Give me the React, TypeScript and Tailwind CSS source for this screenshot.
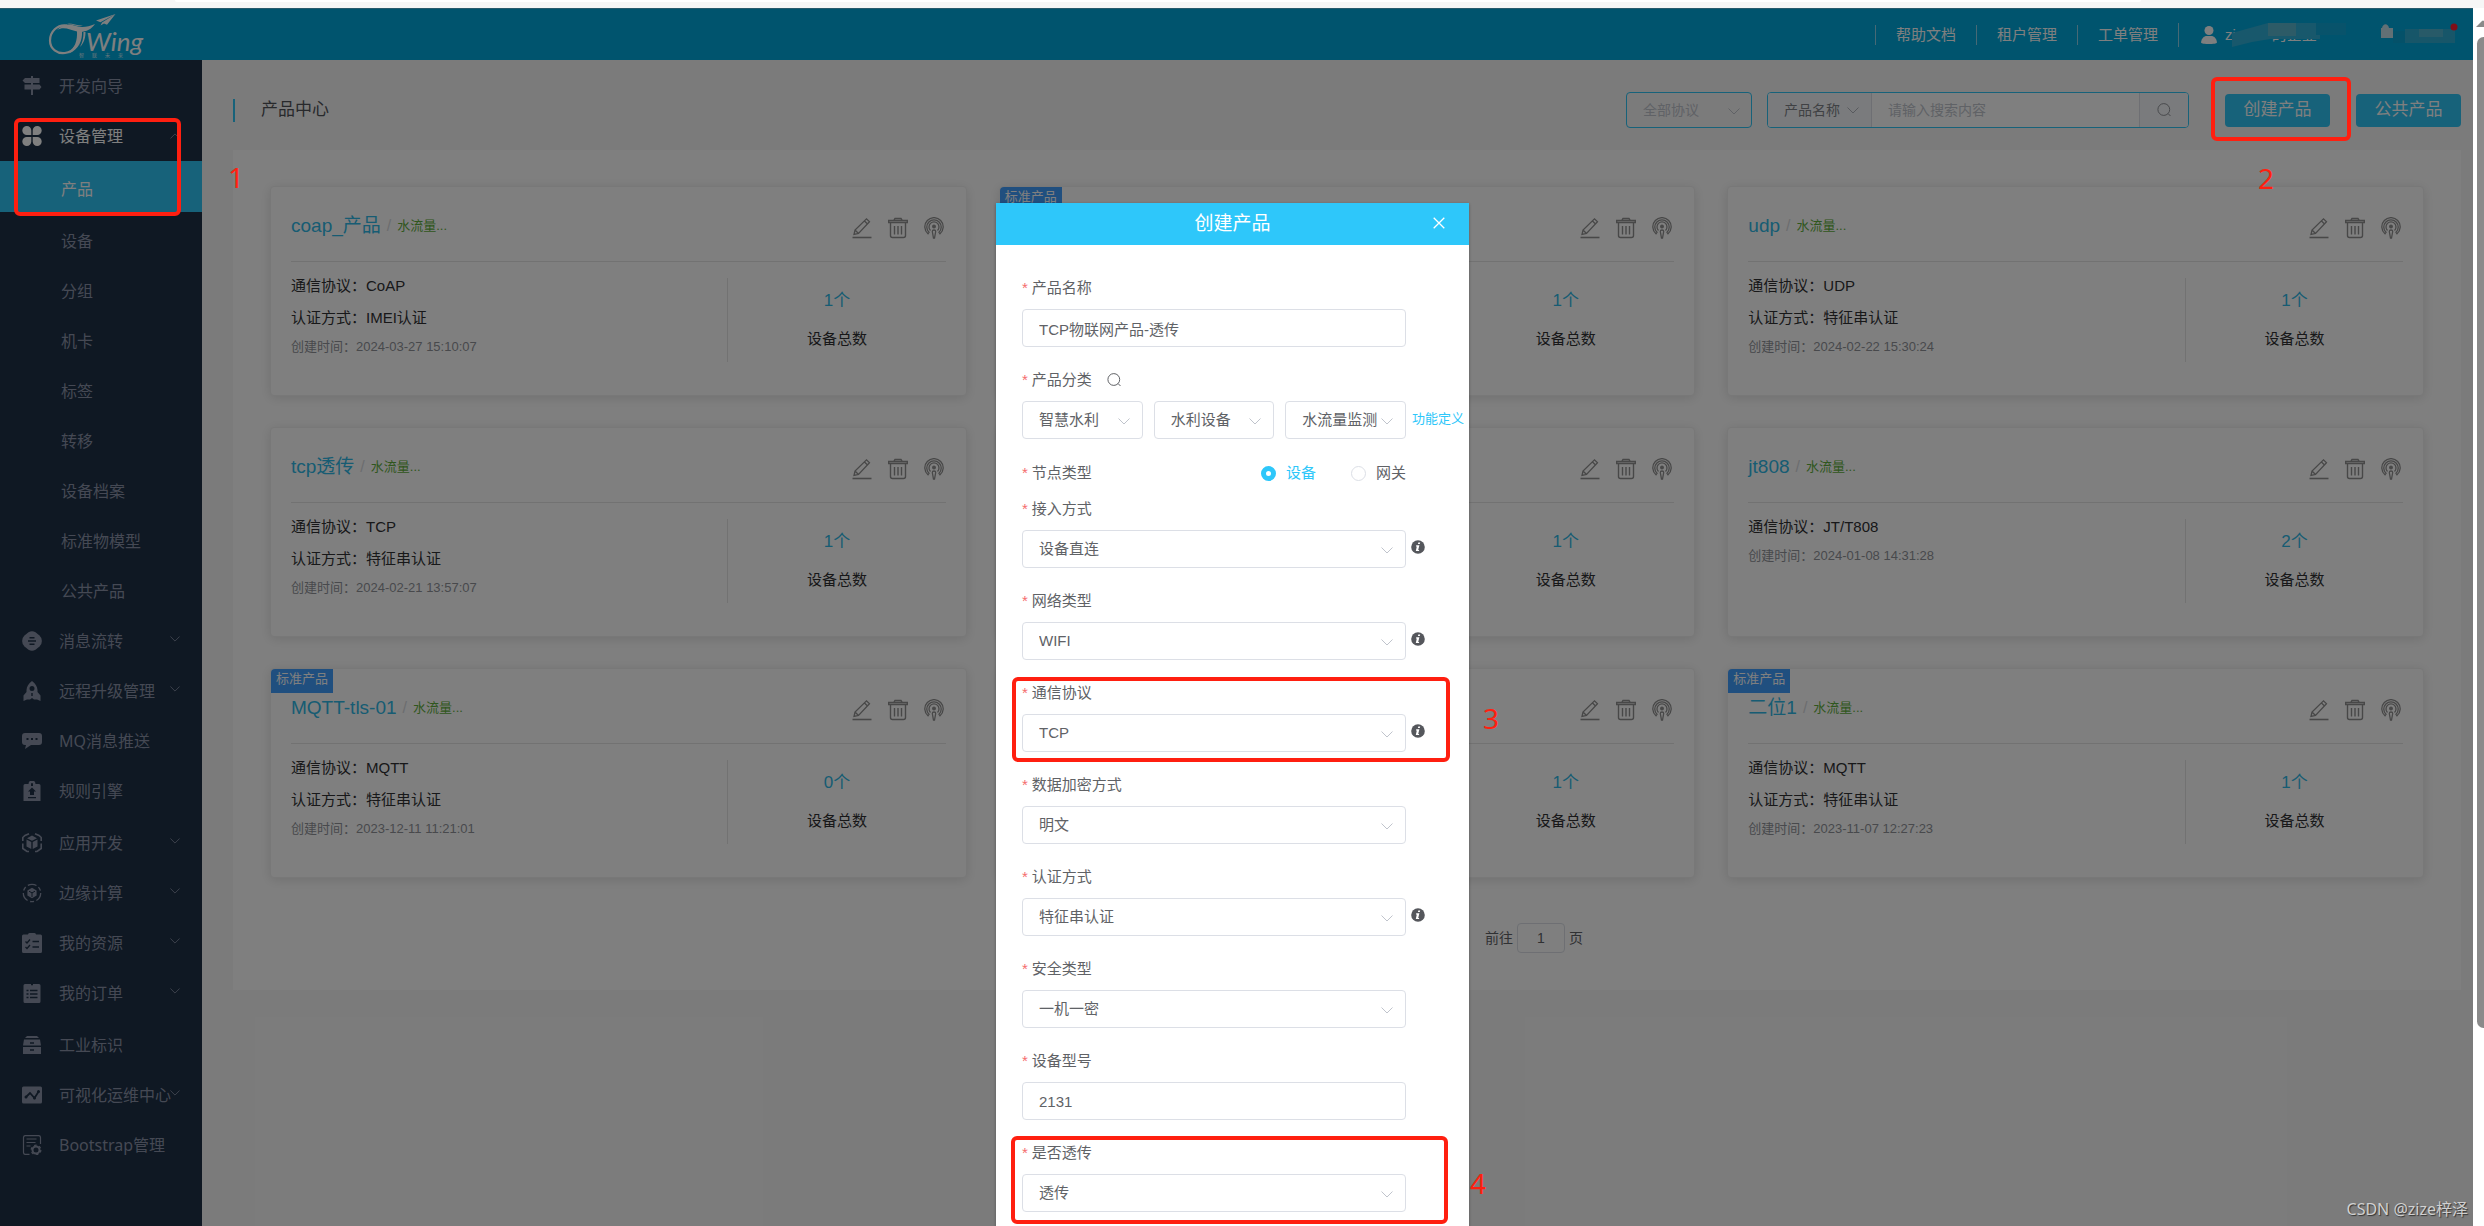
import type { ReactNode } from "react";

type MenuEntry = { label: string; icon: ReactNode; expandable?: boolean };

type Product = {
  name?: string;
  protocol?: string;
  auth?: string;
  createdAt?: string;
  count: number;
  standard?: boolean;
};

const PRODUCTS: Product[] = [
  { name: "coap_产品", protocol: "CoAP", auth: "IMEI认证", createdAt: "2024-03-27 15:10:07", count: 1 },
  { count: 1, standard: true },
  { name: "udp", protocol: "UDP", auth: "特征串认证", createdAt: "2024-02-22 15:30:24", count: 1 },
  { name: "tcp透传", protocol: "TCP", auth: "特征串认证", createdAt: "2024-02-21 13:57:07", count: 1 },
  { count: 1 },
  { name: "jt808", protocol: "JT/T808", createdAt: "2024-01-08 14:31:28", count: 2 },
  { name: "MQTT-tls-01", protocol: "MQTT", auth: "特征串认证", createdAt: "2023-12-11 11:21:01", count: 0, standard: true },
  { count: 1 },
  { name: "二位1", protocol: "MQTT", auth: "特征串认证", createdAt: "2023-11-07 12:27:23", count: 1, standard: true },
];

const DEVICE_PAGES = ["产品", "设备", "分组", "机卡", "标签", "转移", "设备档案", "标准物模型", "公共产品"];

function Glyph({ children }: { children: ReactNode }) {
  return (
    <svg viewBox="0 0 20 20" className="size-5 shrink-0" fill="currentColor" aria-hidden="true">
      {children}
    </svg>
  );
}

const signpostIcon = (
  <Glyph>
    <path d="M9 0h2v2h6.500v5H11v1.500h6.500L19.500 11l-2 2.500H11V19H9v-5.500H2.500v-5H9V7H3L.5 4.500 3 2h6z" />
  </Glyph>
);

const cloverIcon = (
  <Glyph>
    <path d="M4.800 0A4.500 4.500 0 0 1 9.300 4.500V9H4.800a4.500 4.500 0 0 1 0-9zM15.200 0a4.500 4.500 0 0 1 0 9h-4.500V4.500A4.500 4.500 0 0 1 15.200 0zM4.800 11h4.500v4.500A4.500 4.500 0 1 1 4.800 11zM10.700 11h4.500a4.500 4.500 0 1 1-4.500 4.500z" />
  </Glyph>
);

const flowIcon = (
  <Glyph>
    <path d="M6.500 1.200a7 7 0 0 1 7 0l4 3.300a7.500 7.500 0 0 1 0 11l-4 3.300a7 7 0 0 1-7 0l-4-3.300a7.500 7.500 0 0 1 0-11z" />
    <path d="M7.500 6.800h5M6 10h8M7.500 13.200h5" stroke="#1e3046" strokeWidth="1.500" />
  </Glyph>
);

const rocketIcon = (
  <Glyph>
    <path
      fillRule="evenodd"
      d="M10 0c3.500 2.500 5.300 5.500 5.500 9v2l3 3.500V20l-3.500-1.500H12L10 17l-2 1.500H5L1.500 20v-5.500l3-3.500V9C4.700 5.500 6.500 2.500 10 0zm0 5a2.500 2.500 0 1 0 0 5 2.500 2.500 0 0 0 0-5zM9.300 12v3h1.400v-3z"
    />
  </Glyph>
);

const chatIcon = (
  <Glyph>
    <path d="M3 2h14a3 3 0 0 1 3 3v6a3 3 0 0 1-3 3H9l-6 4 1-4H3a3 3 0 0 1-3-3V5a3 3 0 0 1 3-3z" />
    <path d="M4.500 7h2v2h-2zM9 7h2v2H9zM13.500 7h2v2h-2z" fill="#1e3046" />
  </Glyph>
);

const ruleIcon = (
  <Glyph>
    <path fillRule="evenodd" d="M3 3h3.500a3.500 3.500 0 0 1 7 0H17a1.500 1.500 0 0 1 1.500 1.500V20h-17V4.500A1.500 1.500 0 0 1 3 3zm7-1a1 1 0 0 0-1 1v2h2V3a1 1 0 0 0-1-1z" />
    <path d="M10 6.500l4 4h-2V14H8v-3.500H6zM6 16h8v1.300H6z" fill="#1e3046" />
  </Glyph>
);

const appIcon = (
  <Glyph>
    <path d="M10 2.500l5 2.700-5 2.600-5-2.600zM4.500 6.500l4.800 2.600v7L4.500 13.500zM15.500 6.500v7l-4.800 2.600v-7z" />
    <path
      d="M7 .8 3 2.500.8 4.500V8M13 .8l4 1.700 2.200 2V8M.8 10.500v5L5 18.500h2M19.200 10.500v5L15 18.500h-2"
      fill="none"
      stroke="currentColor"
      strokeWidth="1.600"
    />
  </Glyph>
);

const edgeIcon = (
  <Glyph>
    <path d="M10 4.800l4.600 2.600v5.200L10 15.200l-4.600-2.600V7.400z" />
    <path d="M7 8.200l3 1.700 3-1.700M10 9.900V14" fill="none" stroke="#1e3046" strokeWidth="1" />
    <circle cx="10" cy="10" r="8.700" fill="none" stroke="currentColor" strokeWidth="1.300" strokeDasharray="9 2.500 4 2.720" />
  </Glyph>
);

const resourceIcon = (
  <Glyph>
    <path d="M1.500 1.500H6A1.500 1.500 0 0 1 7.500 0h5A1.500 1.500 0 0 1 14 1.500h4.500A1.500 1.500 0 0 1 20 3v15.500a1.500 1.500 0 0 1-1.500 1.500h-17A1.500 1.500 0 0 1 0 18.500V3a1.500 1.500 0 0 1 1.500-1.500z" />
    <path d="M3.500 8.500 5 10l3-3.500M3.500 14 5 15.500 8 12M10.500 8.500H17M10.500 14H17" fill="none" stroke="#1e3046" strokeWidth="1.300" />
  </Glyph>
);

const orderIcon = (
  <Glyph>
    <path d="M3 1h14a1.500 1.500 0 0 1 1.500 1.500v16A1.500 1.500 0 0 1 17 20H3a1.500 1.500 0 0 1-1.500-1.500v-16A1.500 1.500 0 0 1 3 1z" />
    <path d="M4.500 7.500h2M8 7.500h7.500M4.500 11h2M8 11h7.500M4.500 14.500h2M8 14.500h7.500M9 1.500h2" stroke="#1e3046" strokeWidth="1.400" />
  </Glyph>
);

const drawerIcon = (
  <Glyph>
    <path d="M5 1h10l2 2H3zM2 4.500h16l1 6H1zM1 12h18v7H1z" />
    <path d="M8 8h4M8 15h4" stroke="#1e3046" strokeWidth="1.300" />
  </Glyph>
);

const chartIcon = (
  <Glyph>
    <rect x="0" y="1.500" width="20" height="17" rx="1.500" />
    <path d="M4 12l4-4 4.500 5L17 6" fill="none" stroke="#1e3046" strokeWidth="1.800" />
    <circle cx="4" cy="12" r="1.500" fill="#1e3046" />
    <circle cx="12.500" cy="13" r="1.500" fill="#1e3046" />
    <circle cx="16.500" cy="6.500" r="1.500" fill="#1e3046" />
  </Glyph>
);

const bootstrapIcon = (
  <Glyph>
    <path d="M7.500 19.300H3A1.800 1.800 0 0 1 1.500 17.500V2.500A1.800 1.800 0 0 1 3 .7h14a1.800 1.800 0 0 1 1.500 1.800V9M4.500 4h10M4.500 7.500h9M4.500 11h4" fill="none" stroke="currentColor" strokeWidth="1.200" />
    <circle cx="14" cy="15" r="3.500" fill="none" stroke="currentColor" strokeWidth="2" />
    <circle cx="14" cy="15" r="4.800" fill="none" stroke="currentColor" strokeWidth="1.300" strokeDasharray="2.500 2.530" />
  </Glyph>
);

// Lower menu entries, split where the console separates its sections
const MENU_SECTIONS: MenuEntry[][] = [
  [
    { label: "消息流转", icon: flowIcon, expandable: true },
    { label: "远程升级管理", icon: rocketIcon, expandable: true },
    { label: "MQ消息推送", icon: chatIcon },
    { label: "规则引擎", icon: ruleIcon },
  ],
  [
    { label: "应用开发", icon: appIcon, expandable: true },
    { label: "边缘计算", icon: edgeIcon, expandable: true },
    { label: "我的资源", icon: resourceIcon, expandable: true },
    { label: "我的订单", icon: orderIcon, expandable: true },
  ],
  [
    { label: "工业标识", icon: drawerIcon },
    { label: "可视化运维中心", icon: chartIcon, expandable: true },
    { label: "Bootstrap管理", icon: bootstrapIcon },
  ],
];

function Chevron({ className }: { className: string }) {
  return (
    <svg viewBox="0 0 12 7" className={className} fill="none" stroke="currentColor" aria-hidden="true">
      <path d="M.5.5 6 6 11.500.5" />
    </svg>
  );
}

function SearchIcon({ className }: { className: string }) {
  return (
    <svg viewBox="0 0 14 14" className={className} fill="none" stroke="currentColor" aria-hidden="true">
      <circle cx="6.800" cy="6.500" r="5.900" />
      <path d="M11 10.500l2.500 2.500" />
    </svg>
  );
}

function Callout({ className }: { className: string }) {
  return <span className={`pointer-events-none absolute z-50 rounded-md border-4 border-[#ff1f10] ${className}`} />;
}

function CalloutNumber({ value, className }: { value: number; className: string }) {
  return (
    <span className={`pointer-events-none absolute z-50 font-['Noto_Sans',sans-serif] text-[28px] leading-7 text-[#ff1f10] ${className}`}>
      {value}
    </span>
  );
}

function Logo() {
  return (
    <svg viewBox="0 0 100 46" className="ml-12 h-[46px] w-[100px]" fill="#fff" role="img" aria-label="CTWing">
      <path
        d="M19 13.500C9 12 2 20 2 28.500 2 37 9.500 42 17 41c5-.7 8.500-3.500 10.500-7"
        fill="none"
        stroke="#fff"
        strokeWidth="2.200"
      />
      <path d="M9 18c7-7 13-6 19-4s12 1 19-2c-4 6-11 9-18 7.500S16 14 9 18z" />
      <path d="M19 11.500c6-.5 10 2.500 16 2-5 2-10-1-16-2z" />
      <path d="M29 19h5c.5 10-3 18-13 22.500 6-6 8.500-13 8-22.500z" />
      <path d="M35.500 20h2c0 6-1.500 11-5.500 15 2.500-5 3.500-9 3.500-15z" />
      <path d="M67.500 2 48 8.500l4.500 1.800zM67.500 2 54 10.500l-1.500 3 3.500-2 3 1.200z" />
      <text x="38" y="39" fontFamily="Lato, sans-serif" fontSize="26" fontStyle="italic">
        Wing
      </text>
      <g fontFamily="'Noto Sans CJK SC', sans-serif" fontSize="5" opacity="0.8">
        <text x="31" y="45">智</text>
        <text x="44" y="45">联</text>
        <text x="57" y="45">未</text>
        <text x="70" y="45">来</text>
      </g>
    </svg>
  );
}

function TopBar() {
  return (
    <header className="flex h-[52px] shrink-0 items-center justify-between border-t border-[#50b4d8] bg-[#00a8dc] text-[15px] text-white">
      <Logo />
      <div className="flex items-center">
        <nav className="flex">
          {["帮助文档", "租户管理", "工单管理"].map((label) => (
            <a key={label} href="#" className="border-l border-[#8fd3ea] px-5 leading-5">
              {label}
            </a>
          ))}
        </nav>
        <div className="flex w-[295px] items-center border-l border-[#8fd3ea] pl-[22px] leading-5">
          <svg viewBox="0 0 16 18" className="h-[18px] w-4" fill="currentColor" aria-hidden="true">
            <circle cx="8" cy="4.500" r="4.500" />
            <path d="M0 16.500C.5 12 3.500 10 5.500 10h5c2 0 5 2 5.500 6.500-.5 2-15.500 2-16 0z" />
          </svg>
          <span className="ml-2">zi</span>
          {/* account name is masked */}
          <span className="relative ml-9">
            的企业
            <svg viewBox="0 0 120 26" className="absolute -left-10 -top-1 h-[26px] w-[120px]" aria-hidden="true">
              <path d="M0 12 36 2h52v16H38l-18 3-20 5z" fill="#30b0d8" />
              <path d="M36 2h28v13H36z" fill="#5ab6ce" />
              <path d="M84 2h30v12H84z" fill="#10a6d6" />
            </svg>
          </span>
          <svg viewBox="0 0 86 24" className="ml-16 h-6 w-[86px]" aria-hidden="true">
            <path d="M0 15V5h1c1-5 6-5 7 0h4v10z" fill="#c4e0ea" />
            <path d="M24 6h50v14H24z" fill="#2eacd2" />
            <path d="M38 6h24v8H38z" fill="#50b4d0" />
            <path d="M12 8h12v12H12z" fill="#08a2d2" />
            <circle cx="73" cy="4" r="3.500" fill="#ff1e30" />
          </svg>
        </div>
      </div>
    </header>
  );
}

function Sidebar() {
  return (
    <nav className="relative w-[202px] shrink-0 bg-[#1e3046] font-['Noto_Sans','Noto_Sans_CJK_SC',sans-serif] text-base text-[#8b93a8]">
      <a href="#" className="flex h-[51px] items-center gap-[17px] pl-[22px]">
        {signpostIcon}
        开发向导
      </a>
      <button type="button" className="flex h-[50px] w-full items-center gap-[17px] pl-[22px] text-white">
        {cloverIcon}
        设备管理
        <Chevron className="ml-auto mr-[22px] h-[6px] w-[10px] rotate-180 text-[#8b93a8]" />
      </button>
      <ul className="pb-1">
        {DEVICE_PAGES.map((label, index) => (
          <li key={label}>
            <a
              href="#"
              className={`flex items-center pl-[61px] ${index === 0 ? "h-[51px] bg-[#2ec4f4] pt-1 text-white" : "h-[50px] pt-2"}`}
            >
              {label}
            </a>
          </li>
        ))}
      </ul>
      <div className="flex flex-col gap-[2px]">
        {MENU_SECTIONS.map((section) => (
          <ul key={section[0].label}>
            {section.map((entry) => (
              <li key={entry.label}>
                <button type="button" className="relative flex h-[50px] w-full items-center gap-[17px] pl-[22px]">
                  {entry.icon}
                  {entry.label}
                  {entry.expandable && <Chevron className="absolute right-[22px] top-5 h-[6px] w-[10px]" />}
                </button>
              </li>
            ))}
          </ul>
        ))}
      </div>
      <Callout className="left-[14px] right-[21px] top-[58px] h-[98px]" />
      <CalloutNumber value={1} className="-right-[42px] top-[103px]" />
    </nav>
  );
}

function Toolbar() {
  return (
    <div className="flex items-center pb-[22px] pt-8">
      <h1 className="flex h-[23px] items-center border-l-2 border-[#2ec4f4] pl-[26px] text-[17px] text-[#505358]">产品中心</h1>
      <div className="relative ml-auto mr-[15px] w-[126px] text-[#c0c4cc]">
        <select aria-label="协议" className="h-9 w-full appearance-none rounded border border-[#2ec4f4] pl-4 text-sm">
          <option>全部协议</option>
        </select>
        <Chevron className="pointer-events-none absolute right-3 top-4 h-[7px] w-3" />
      </div>
      <div className="flex h-9 w-[422px] overflow-hidden rounded border border-[#2ec4f4] bg-white text-sm">
        <div className="relative w-[104px] border-r border-[#dcdfe6] bg-[#f5f7fa] text-[#808389]">
          <select aria-label="搜索字段" className="h-full w-full appearance-none pl-4">
            <option>产品名称</option>
          </select>
          <Chevron className="pointer-events-none absolute right-3 top-[14px] h-[7px] w-3 text-[#b0b4bc]" />
        </div>
        <input
          aria-label="搜索内容"
          placeholder="请输入搜索内容"
          className="min-w-0 flex-1 px-4 placeholder:text-[#c0c4cc]"
        />
        <button type="button" aria-label="搜索" className="flex w-[49px] items-center justify-center border-l border-[#dcdfe6] bg-[#f5f7fa] text-[#909399]">
          <SearchIcon className="size-[14px]" />
        </button>
      </div>
      <div className="relative ml-9 mr-[26px]">
        <button type="button" className="h-[33px] w-[105px] rounded bg-[#2ec4f4] text-[17px] text-white">
          创建产品
        </button>
        <Callout className="-bottom-[14px] -left-[14px] -right-[21px] -top-[17px]" />
        <CalloutNumber value={2} className="left-[33px] top-[70px]" />
      </div>
      <button type="button" className="h-[33px] w-[105px] rounded bg-[#2ec4f4] text-[17px] text-white">
        公共产品
      </button>
    </div>
  );
}

function CardActions() {
  return (
    <div className="ml-auto mr-[2px] flex gap-4 pt-1 text-[#909090]">
      <button type="button" aria-label="编辑">
        <svg viewBox="0 0 20 22" className="h-[22px] w-5" fill="none" stroke="currentColor" strokeWidth="1.300" aria-hidden="true">
          <path d="M2 17.500 3 13 14.500 1.800l3 3L6.500 16.500zM12.500 4l3 3M3 13l3.500 3.500" />
          <path d="M.5 20.500h19" strokeWidth="1.600" />
        </svg>
      </button>
      <button type="button" aria-label="删除">
        <svg viewBox="0 0 20 22" className="h-[22px] w-5" fill="none" stroke="currentColor" strokeWidth="1.400" aria-hidden="true">
          <path d="M.7 3.500h18.600v2H.7zM6 3.200 7 1.500h6l1 1.700M2.500 6v12.500c0 1.300.8 2 2 2h11c1.200 0 2-.7 2-2V6M6.500 9v8.500M10 9v8.500M13.500 9v8.500" />
        </svg>
      </button>
      <button type="button" aria-label="发布">
        <svg viewBox="0 0 20 22" className="h-[22px] w-5" fill="none" stroke="currentColor" strokeWidth="1.300" aria-hidden="true">
          <path d="M4 16.800a9.200 9.200 0 1 1 12 0l-1-1.500a7.200 7.200 0 1 0-10 0z" />
          <path d="M6.500 13.500a5 5 0 1 1 7 0" />
          <circle cx="10" cy="9.500" r="1.300" fill="currentColor" />
          <path d="M8.300 14.500c0-2 3.400-2 3.400 0L10.500 21h-1z" />
        </svg>
      </button>
    </div>
  );
}

function ProductCard({ product }: { product: Product }) {
  return (
    <article className="relative rounded border border-[#f0f0f0] bg-white px-5 pb-[33px] text-[15px] text-[#303133] shadow-[0_2px_12px_rgba(0,0,0,0.12)]">
      {product.standard && (
        <span className="absolute left-0 top-0 h-6 rounded-tl bg-[#409eff] px-[5px] text-[13px] leading-5 text-white">标准产品</span>
      )}
      <div className="flex h-[75px] items-center border-b border-[#e4e4e4] pt-1">
        {product.name && (
          <div className="flex items-center gap-[6px] text-[13px]">
            <a href="#" className="text-[19px] text-[#2eb8e6]">
              {product.name}
            </a>
            <span className="text-base text-[#d8dade]">/</span>
            <span className="text-[#5fae3c]">水流量...</span>
          </div>
        )}
        <CardActions />
      </div>
      <div className="flex pt-4">
        <dl className="-mt-2 h-[84px] flex-1">
          {product.protocol && (
            <div className="flex leading-8">
              <dt>通信协议：</dt>
              <dd>{product.protocol}</dd>
            </div>
          )}
          {product.auth && (
            <div className="flex leading-8">
              <dt>认证方式：</dt>
              <dd>{product.auth}</dd>
            </div>
          )}
          {product.createdAt && (
            <div className="flex text-[13px] leading-[26px] text-[#909399]">
              <dt>创建时间：</dt>
              <dd>{product.createdAt}</dd>
            </div>
          )}
        </dl>
        <div className="flex h-[84px] w-1/3 flex-col items-center justify-center gap-[14px] border-l border-[#e4e4e4]">
          <span className="text-[17px] leading-6 text-[#2eb8e6]">{product.count}个</span>
          <span className="leading-6">设备总数</span>
        </div>
      </div>
    </article>
  );
}

function Field({ id, label, extra, info, children }: { id: string; label: string; extra?: ReactNode; info?: boolean; children: ReactNode }) {
  return (
    <div className="relative mb-3 w-[384px]">
      <div className="flex h-[42px] items-center">
        <label htmlFor={id}>
          <span className="mr-1 text-[#f56c6c]">*</span>
          {label}
        </label>
        {extra}
      </div>
      {children}
      {info && (
        <svg viewBox="0 0 14 14" className="absolute -right-[19px] top-[52px] size-[14px]" aria-hidden="true">
          <circle cx="7" cy="7" r="6.800" fill="#55575c" />
          <path d="M7.300 2.500h1.900l-.4 1.600H6.900zM5.300 5.300h3.100l-1.200 4.600h1l-.2 1H4.800l1-4.500h-.9z" fill="#fff" />
        </svg>
      )}
    </div>
  );
}

function SelectBox({ id, value, label }: { id?: string; value: string; label?: string }) {
  return (
    <div className="relative flex-1">
      <select
        id={id}
        aria-label={label}
        className="h-[38px] w-full appearance-none rounded border border-[#dcdfe6] bg-white pl-4 pr-7"
      >
        <option>{value}</option>
      </select>
      <Chevron className="pointer-events-none absolute right-[13px] top-[17px] h-[7px] w-3 text-[#c0c4cc]" />
    </div>
  );
}

function CreateProductDialog() {
  const inputClass = "h-[38px] w-full rounded border border-[#dcdfe6] bg-white px-4";

  return (
    <div role="dialog" aria-label="创建产品" className="h-max w-[473px] bg-white text-[15px] text-[#606266] shadow-[0_1px_3px_rgba(0,0,0,0.3)]">
      <div className="relative flex h-[42px] items-center justify-center bg-[#2ec7fa] text-[19px] text-white">
        <h2>创建产品</h2>
        <button type="button" aria-label="关闭" className="absolute right-6 top-[14px]">
          <svg viewBox="0 0 12 12" className="size-3" stroke="currentColor" strokeWidth="1.300" aria-hidden="true">
            <path d="M.7.7l10.600 10.600M11.300.7.7 11.300" />
          </svg>
        </button>
      </div>
      <form className="px-[26px] pb-10 pt-[22px]">
        <Field id="name" label="产品名称">
          <input id="name" defaultValue="TCP物联网产品-透传" className={inputClass} />
        </Field>
        <Field id="category" label="产品分类" extra={<SearchIcon className="ml-[15px] size-[14px]" />}>
          <div className="flex gap-[11px]">
            <SelectBox id="category" value="智慧水利" />
            <SelectBox label="二级分类" value="水利设备" />
            <SelectBox label="三级分类" value="水流量监测" />
          </div>
          <a href="#" className="absolute left-[390px] top-[50px] whitespace-nowrap text-[13px] leading-5 text-[#2ec7fa]">
            功能定义
          </a>
        </Field>
        <fieldset className="flex h-[37px] w-[384px] items-center justify-between pt-2">
          <span>
            <span className="mr-1 text-[#f56c6c]">*</span>
            节点类型
          </span>
          <span className="flex gap-[35px]">
            <label className="flex items-center gap-[10px] text-[#2ec7fa]">
              <input
                type="radio"
                name="node"
                defaultChecked
                className="size-[15px] appearance-none rounded-full border-[#2ec7fa] bg-white checked:border-[5px]"
              />
              设备
            </label>
            <label className="flex items-center gap-[10px]">
              <input type="radio" name="node" className="size-[15px] appearance-none rounded-full border border-[#dcdfe6]" />
              网关
            </label>
          </span>
        </fieldset>
        <Field id="access" label="接入方式" info>
          <SelectBox id="access" value="设备直连" />
        </Field>
        <Field id="network" label="网络类型" info>
          <SelectBox id="network" value="WIFI" />
        </Field>
        <Field id="protocol" label="通信协议" info>
          <SelectBox id="protocol" value="TCP" />
          <Callout className="-bottom-[10px] -left-[10px] -right-11 top-[5px]" />
          <CalloutNumber value={3} className="-right-[93px] top-8" />
        </Field>
        <Field id="encryption" label="数据加密方式">
          <SelectBox id="encryption" value="明文" />
        </Field>
        <Field id="auth" label="认证方式" info>
          <SelectBox id="auth" value="特征串认证" />
        </Field>
        <Field id="security" label="安全类型">
          <SelectBox id="security" value="一机一密" />
        </Field>
        <Field id="model" label="设备型号">
          <input id="model" defaultValue="2131" className={inputClass} />
        </Field>
        <Field id="transparent" label="是否透传">
          <SelectBox id="transparent" value="透传" />
          <Callout className="-bottom-3 -left-[11px] -right-[42px] top-1" />
          <CalloutNumber value={4} className="-right-[80px] top-[37px]" />
        </Field>
      </form>
    </div>
  );
}

export default function App() {
  return (
    <div className="flex h-screen flex-col overflow-hidden bg-[#f6f6f6] font-['Liberation_Sans','Noto_Sans_CJK_SC',sans-serif]">
      <div className="h-2 shrink-0 px-[175px]">
        <div className="mr-[168px] h-[2px] rounded-b-lg bg-white" />
      </div>
      <div className="flex min-h-0 flex-1">
        <div className="relative flex min-w-0 flex-1 flex-col">
          <TopBar />
          <div className="flex min-h-0 flex-1">
            <Sidebar />
            <main className="min-w-0 flex-1 bg-[#f7f7f7] pl-[31px] pr-3">
              <Toolbar />
              <section className="bg-white px-[37px] pb-[37px] pt-9">
                <div className="grid grid-cols-3 gap-x-8 gap-y-[31px]">
                  {PRODUCTS.map((product, index) => (
                    <ProductCard key={index} product={product} />
                  ))}
                </div>
                <div className="mt-[45px] flex justify-center text-sm text-[#606266]">
                  <label className="flex w-[472px] items-center justify-end gap-1">
                    前往
                    <input defaultValue="1" className="h-[30px] w-12 rounded border border-[#dcdfe6] text-center" />
                    页
                  </label>
                </div>
              </section>
            </main>
          </div>
          <div className="absolute inset-0 z-40 flex justify-center overflow-hidden bg-black/50 pr-2 pt-[195px]">
            <CreateProductDialog />
          </div>
          <span className="absolute bottom-[5px] right-[5px] z-50 font-['Noto_Sans','Noto_Sans_CJK_SC',sans-serif] text-base leading-6 text-[#d0d0d0] [text-shadow:1px_1px_1px_#333]">
            CSDN @zize梓泽
          </span>
        </div>
        <div className="flex w-[11px] flex-col overflow-hidden bg-white pl-1 pt-3">
          <svg viewBox="0 0 14 7" className="-ml-px h-[7px] w-[14px]" fill="#8a8a8a" aria-hidden="true">
            <path d="M0 7 6 1q1-1 2 0l6 6z" />
          </svg>
          <div className="mb-[198px] mt-[10px] w-[13px] flex-1 rounded-full bg-[#8a8a8a]" />
        </div>
      </div>
    </div>
  );
}
